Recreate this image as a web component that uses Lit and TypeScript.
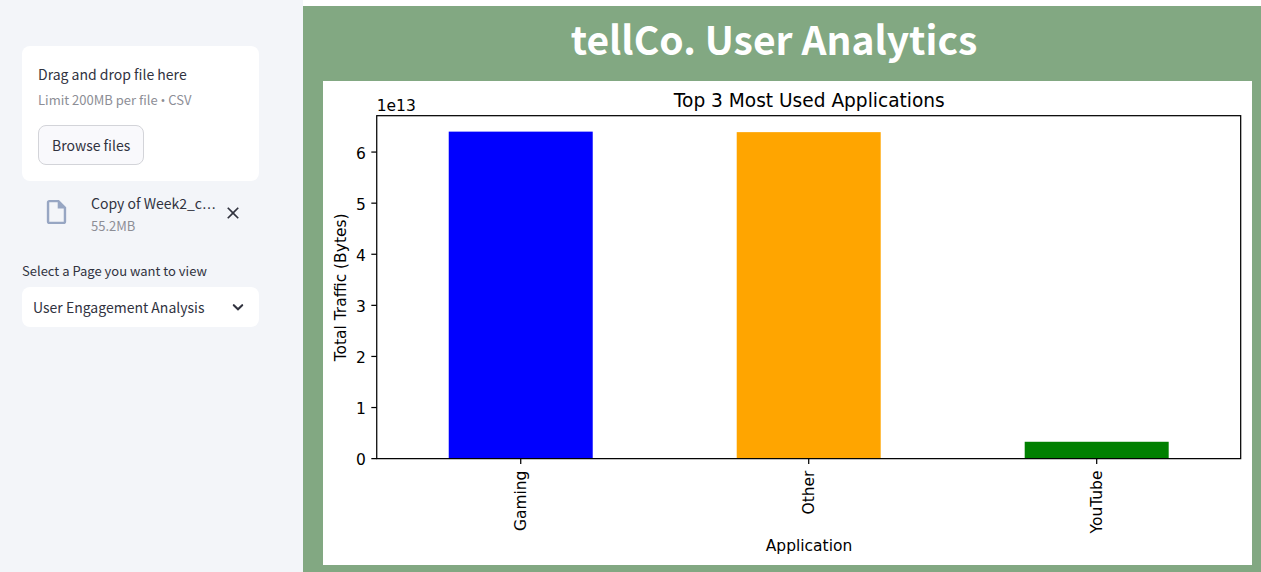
import { LitElement, html, svg, css } from "lit";
import { customElement, property, state } from "lit/decorators.js";

interface Bar {
  label: string;
  value: number;
  color: string;
}

const TICKS = [0, 1, 2, 3, 4, 5, 6];

// Chart geometry, in typographic points of the figure.
const PLOT = { left: 34.7, right: 592.7, top: 22.4, bottom: 243.9, unit: 33 };

@customElement("usage-chart")
class UsageChart extends LitElement {
  @property({ attribute: false }) bars: Bar[] = [];

  static styles = css`
    :host {
      display: block;
      background: #fff;
    }
    .chart {
      display: block;
      width: 100%;
      height: auto;
      font-family: "DejaVu Sans", sans-serif;
      font-size: 10px;
      fill: #000;
    }
    .title {
      font-size: 12px;
    }
    .line {
      fill: none;
      stroke: #000;
      stroke-width: 0.8;
    }
    .middle {
      text-anchor: middle;
    }
    .end {
      text-anchor: end;
    }
  `;

  render() {
    const { left, right, top, bottom, unit } = PLOT;
    const slot = (right - left) / Math.max(this.bars.length, 1);
    const center = (left + right) / 2;
    return html`
      <svg class="chart" viewBox="0 0 600 312.6" role="img" aria-label="Top 3 Most Used Applications">
        <text class="title middle" x=${center + 0.4} y="16.8">Top 3 Most Used Applications</text>
        <text x=${left} y="19.3">1e13</text>
        ${this.bars.map((bar, i) => {
          const x = left + slot * (i + 0.5);
          return svg`
            <rect x=${x - slot / 4} y=${bottom - bar.value * unit} width=${slot / 2}
              height=${bar.value * unit} fill=${bar.color}></rect>
            <path class="line" d="M${x} ${bottom}v3.5"></path>
            <text class="end" transform="translate(${x + 3.2} 251.6) rotate(-90)">${bar.label}</text>
          `;
        })}
        ${TICKS.map(
          (t) => svg`
            <path class="line" d="M${left - 3.5} ${bottom - t * unit}h3.5"></path>
            <text class="end" x=${left - 7} y=${bottom - t * unit + 4.2}>${t}</text>
          `
        )}
        <rect class="line" x=${left} y=${top} width=${right - left} height=${bottom - top}></rect>
        <text class="middle" x=${center + 0.2} y="303.5">Application</text>
        <text class="middle" transform="translate(14.8 133.3) rotate(-90)">Total Traffic (Bytes)</text>
      </svg>
    `;
  }
}

@customElement("app-root")
class AppRoot extends LitElement {
  @state() private hasFile = true;

  private bars: Bar[] = [
    { label: "Gaming", value: 6.4, color: "#0000ff" },
    { label: "Other", value: 6.39, color: "#ffa500" },
    { label: "YouTube", value: 0.33, color: "#008000" },
  ];

  static styles = css`
    :host {
      display: grid;
      grid-template-columns: 303px minmax(0, 1fr);
      min-height: 100vh;
      color: #31333f;
      background: #fff;
      font-family: "Noto Sans CJK SC", "Noto Sans", sans-serif;
      font-size: 14px;
      line-height: 24px;
    }
    * {
      box-sizing: border-box;
    }
    .sidebar {
      background: #f3f5f9;
      padding: 46px 44px 24px 22px;
    }
    .dropzone {
      background: #fff;
      border-radius: 8px;
      padding: 16px;
    }
    .small {
      font-size: 13px;
      line-height: 20px;
    }
    .muted {
      color: #8d8e96;
    }
    .bullet {
      font-family: "Open Sans", "Noto Sans", sans-serif;
      line-height: 1;
    }
    .ellipsis {
      font-family: "DejaVu Sans", sans-serif;
      line-height: 1;
    }
    .limit {
      margin: 4px 0 15px;
    }
    .browse {
      display: block;
      height: 40px;
      padding: 0 13px;
      border: 1px solid #d3d4d9;
      border-radius: 8px;
      background: #f9f9fc;
      color: inherit;
      font: inherit;
    }
    .file {
      display: flex;
      align-items: flex-start;
      padding: 10px 16px 0 20px;
    }
    .file-icon {
      flex: none;
      width: 29px;
      height: 30px;
      margin: 6px 20px 0 0;
      fill: #97a6c3;
    }
    .file-info {
      flex: 1;
      min-width: 0;
    }
    .name {
      white-space: nowrap;
    }
    .size {
      font-size: 13px;
      line-height: 22px;
    }
    .remove {
      display: flex;
      padding: 0;
      margin: 12px 0 0 4px;
      border: 0;
      background: none;
      color: inherit;
    }
    .icon {
      width: 20px;
      height: 20px;
      fill: currentColor;
    }
    .label {
      display: block;
      margin: 24px 0 6px;
    }
    .select-box {
      display: grid;
      align-items: center;
    }
    .select {
      grid-area: 1 / 1;
      width: 100%;
      height: 40px;
      padding: 0 40px 0 11px;
      border: 0;
      border-radius: 8px;
      appearance: none;
      background: #fff;
      color: inherit;
      font: inherit;
    }
    .chevron {
      grid-area: 1 / 1;
      justify-self: end;
      margin-right: 11px;
      pointer-events: none;
    }
    .main {
      margin-top: 6px;
      padding: 0 9px 7px 20px;
      background: #82a882;
    }
    .heading {
      margin: 0;
      padding: 2px 27px 13px 0;
      color: #fff;
      font-size: 39px;
      font-weight: 700;
      line-height: 60px;
      text-align: center;
    }
  `;

  private browse() {
    this.renderRoot.querySelector<HTMLInputElement>("#upload")?.click();
  }

  render() {
    return html`
      <aside class="sidebar">
        <section class="dropzone">
          <div>Drag and drop file here</div>
          <div class="small muted limit">Limit 200MB per file <span class="bullet">•</span> CSV</div>
          <input id="upload" type="file" accept=".csv" aria-label="Upload CSV" hidden
            @change=${() => (this.hasFile = true)} />
          <button class="browse" @click=${this.browse}>Browse files</button>
        </section>
        ${this.hasFile
          ? html`<div class="file">
              <svg class="file-icon" viewBox="0 0 24 24" aria-hidden="true">
                <path d="M14 2H6c-1.100 0-2 .9-2 2v16c0 1.100.9 2 2 2h12c1.100 0 2-.9 2-2V8l-6-6zM6 20V4h7v5h5v11H6z"></path>
              </svg>
              <div class="file-info">
                <div class="name">Copy of Week2_c<span class="ellipsis">…</span></div>
                <div class="size muted">55.2MB</div>
              </div>
              <button class="remove" aria-label="Remove file" @click=${() => (this.hasFile = false)}>
                <svg class="icon" viewBox="0 0 24 24" aria-hidden="true">
                  <path d="M19 6.410 17.590 5 12 10.590 6.410 5 5 6.410 10.590 12 5 17.590 6.410 19 12 13.410 17.590 19 19 17.590 13.410 12z"></path>
                </svg>
              </button>
            </div>`
          : null}
        <label class="label small" for="page">Select a Page you want to view</label>
        <div class="select-box">
          <select class="select" id="page">
            <option>User Engagement Analysis</option>
          </select>
          <svg class="icon chevron" viewBox="0 0 20 20" aria-hidden="true">
            <path d="M5.800 8.200 10 12.200 14.200 8.200" fill="none" stroke="currentColor" stroke-width="2.100" stroke-linecap="round" stroke-linejoin="miter"></path>
          </svg>
        </div>
      </aside>
      <main class="main">
        <h1 class="heading">tellCo. User Analytics</h1>
        <usage-chart .bars=${this.bars}></usage-chart>
      </main>
    `;
  }
}
